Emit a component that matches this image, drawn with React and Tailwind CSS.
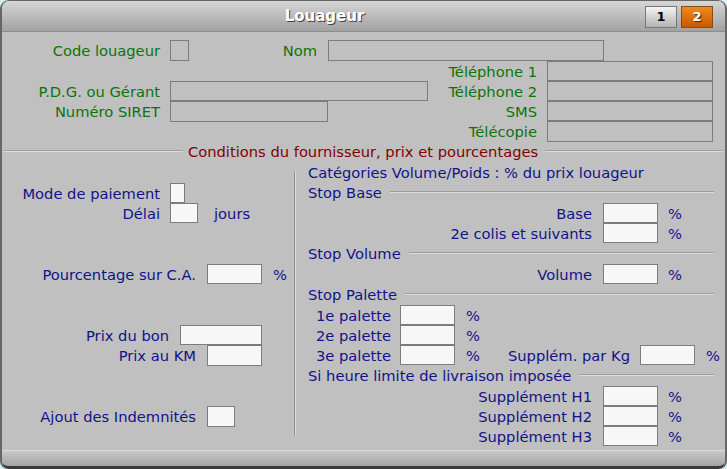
import React from "react"

function Label({ w, color = "green", children, className = "" }) {
  const c = color === "green" ? "text-[#0b740b]" : "text-[#12128a]"
  return (
    <span className={`${c} shrink-0 pt-[2px] text-right whitespace-nowrap ${className}`} style={{ width: w }}>
      {children}
    </span>
  )
}

function Box({ w, h = 20, light, className = "" }) {
  return (
    <div
      className={`shrink-0 border border-[#7c7c7c] ${light ? "bg-[#f7f7f7]" : "bg-[#c0c0c0]"} ${className}`}
      style={{ width: w, height: h }}
    />
  )
}

function Text({ children, className = "" }) {
  return <span className={`pt-[2px] text-[#12128a] whitespace-nowrap ${className}`}>{children}</span>
}

function Heading({ children }) {
  return (
    <div className="flex h-[20px] items-center">
      <Text>{children}</Text>
      <div className="ml-[8px] mr-[11px] h-[2px] flex-1 border-t border-[#9c9c9c] border-b border-b-[#dedede]" />
    </div>
  )
}

function PctRow({ label, w = 284, mt }) {
  return (
    <div className={`flex h-[20px] items-center ${mt ? "mt-[1px]" : ""}`}>
      <Label w={w} color="blue">{label}</Label>
      <Box w={55} light className="ml-[11px]" />
      <Text className="ml-[10px]">%</Text>
    </div>
  )
}

function PaletteRow({ label, mt, children }) {
  return (
    <div className={`flex h-[20px] items-center ${mt ? "mt-[1px]" : ""}`}>
      <Text className="ml-[8px] w-[73px]">{label}</Text>
      <Box w={55} light className="ml-[11px]" />
      <Text className="ml-[11px]">%</Text>
      {children}
    </div>
  )
}

export default function App() {
  return (
    <div className="h-[469px] w-[727px] bg-[#d6eeee] font-['DejaVu_Sans',sans-serif] text-[14.7px] leading-none">
      <div className="flex h-[469px] flex-col overflow-hidden rounded-t-[9px] rounded-b-[8px] border-l-2 border-r-2 border-t border-[#666] bg-[#c0c0c0]">
        {/* title bar */}
        <div className="flex h-[31px] shrink-0 items-center border-b border-[#8c8c8c] bg-gradient-to-b from-[#d6d6d6] to-[#a2a2a2]">
          <div className="flex-1 pl-[2px] text-center text-[15px] font-bold text-white [text-shadow:1px_1px_0_#444]">
            Louageur
          </div>
          <div className="mr-[12px] flex gap-[4px] pt-[1px]">
            <div className="flex h-[22px] w-[32px] items-center justify-center border border-[#777] bg-gradient-to-b from-[#f4f4f4] to-[#b4b4b4] text-[13px] font-bold text-black">
              1
            </div>
            <div className="flex h-[22px] w-[32px] items-center justify-center border border-[#8a4a10] bg-gradient-to-b from-[#f08a1c] to-[#c85800] text-[13px] font-bold text-white [text-shadow:1px_1px_0_#333]">
              2
            </div>
          </div>
        </div>

        {/* body */}
        <div className="flex-1 pt-[8px]">
          <div className="flex h-[21px] items-center">
            <Label w={158}>Code louageur</Label>
            <Box w={19} h={21} className="ml-[10px]" />
            <Label w={128}>Nom</Label>
            <Box w={276} h={21} className="ml-[11px]" />
          </div>

          <div className="flex h-[20px] items-center">
            <div className="w-[438px] shrink-0" />
            <Label w={97}>Téléphone 1</Label>
            <Box w={166} className="ml-[10px]" />
          </div>
          <div className="flex h-[20px] items-center">
            <div className="flex w-[438px] shrink-0 items-center">
              <Label w={158}>P.D.G. ou Gérant</Label>
              <Box w={258} className="ml-[10px]" />
            </div>
            <Label w={97}>Téléphone 2</Label>
            <Box w={166} className="ml-[10px]" />
          </div>
          <div className="flex h-[20px] items-center">
            <div className="flex w-[438px] shrink-0 items-center">
              <Label w={158}>Numéro SIRET</Label>
              <Box w={158} h={21} className="ml-[10px]" />
            </div>
            <Label w={97}>SMS</Label>
            <Box w={166} className="ml-[10px]" />
          </div>
          <div className="flex h-[21px] items-center">
            <div className="w-[438px] shrink-0" />
            <Label w={97}>Télécopie</Label>
            <Box w={166} h={21} className="ml-[10px]" />
          </div>

          <div className="flex h-[18px] items-center">
            <div className="ml-[2px] h-[2px] w-[179px] border-t border-[#9c9c9c] border-b border-b-[#dedede]" />
            <span className="ml-[5px] pt-[2px] whitespace-nowrap text-[#800000]">
              Conditions du fournisseur, prix et pourcentages
            </span>
            <div className="ml-[7px] mr-[2px] h-[2px] flex-1 border-t border-[#9c9c9c] border-b border-b-[#dedede]" />
          </div>

          <div className="flex">
            {/* left column */}
            <div className="w-[292px] shrink-0">
              <div className="mt-[23px] flex h-[20px] items-center">
                <Label w={158} color="blue">Mode de paiement</Label>
                <Box w={15} light className="ml-[10px]" />
              </div>
              <div className="flex h-[20px] items-center">
                <Label w={158} color="blue">Délai</Label>
                <Box w={28} light className="ml-[10px]" />
                <Text className="ml-[16px]">jours</Text>
              </div>
              <div className="mt-[41px] flex h-[20px] items-center">
                <Label w={194} color="blue">Pourcentage sur C.A.</Label>
                <Box w={55} light className="ml-[11px]" />
                <Text className="ml-[11px]">%</Text>
              </div>
              <div className="mt-[41px] flex h-[20px] items-center">
                <Label w={167} color="blue">Prix du bon</Label>
                <Box w={82} light className="ml-[11px]" />
              </div>
              <div className="flex h-[21px] items-center">
                <Label w={194} color="blue">Prix au KM</Label>
                <Box w={55} h={21} light className="ml-[11px]" />
              </div>
              <div className="mt-[40px] flex h-[21px] items-center">
                <Label w={194} color="blue">Ajout des Indemnités</Label>
                <Box w={28} h={21} light className="ml-[11px]" />
              </div>
            </div>

            {/* divider */}
            <div className="mt-[12px] h-[263px] w-[2px] shrink-0 border-l border-[#8e8e8e] border-r border-r-[#dcdcdc]" />

            {/* right column */}
            <div className="flex-1 pl-[12px] pt-[2px]">
              <div className="flex h-[20px] items-center">
                <Text>Catégories Volume/Poids : % du prix louageur</Text>
              </div>
              <Heading>Stop Base</Heading>
              <PctRow label="Base" mt />
              <PctRow label="2e colis et suivants" />
              <Heading>Stop Volume</Heading>
              <PctRow label="Volume" mt />
              <Heading>Stop Palette</Heading>
              <PaletteRow label="1e palette" mt />
              <PaletteRow label="2e palette" />
              <PaletteRow label="3e palette">
                <Text className="ml-[28px] w-[121px]">Supplém. par Kg</Text>
                <Box w={55} light className="ml-[11px]" />
                <Text className="ml-[11px]">%</Text>
              </PaletteRow>
              <Heading>Si heure limite de livraison imposée</Heading>
              <PctRow label="Supplément H1" mt />
              <PctRow label="Supplément H2" />
              <PctRow label="Supplément H3" />
            </div>
          </div>
        </div>

        {/* bottom bar */}
        <div className="h-[19px] shrink-0 rounded-b-[7px] border-t border-[#dadada] border-b-[3px] border-b-[#3a3a3a] bg-gradient-to-b from-[#c8c8c8] to-[#a4a4a4]" />
      </div>
    </div>
  )
}
